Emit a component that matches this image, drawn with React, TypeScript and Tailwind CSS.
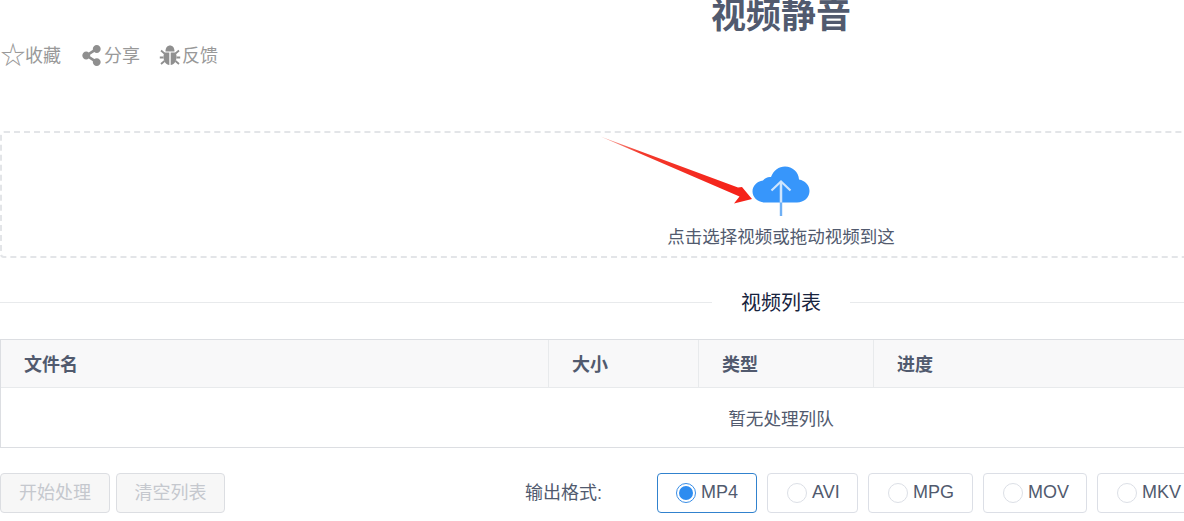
import { FaShareAlt } from "react-icons/fa";

const FONT = "[font-family:'Liberation_Sans','Noto_Sans_CJK_SC',sans-serif]";

function Radio({ label, checked, width }: { label: string; checked?: boolean; width: string }) {
  return (
    <label
      className={`flex h-10 shrink-0 items-center rounded border ${checked ? "pl-[18px]" : "pl-[19px]"} ${width} ${
        checked ? "border-[#3182ce]" : "border-[#dcdfe6]"
      }`}
    >
      <span
        className={`mr-[5px] flex h-5 w-5 shrink-0 items-center justify-center rounded-full border ${
          checked ? "border-[#3a8ee6]" : "border-[#dcdfe6]"
        }`}
      >
        {checked && <span className="h-[14px] w-[14px] rounded-full bg-[#2d8cf0]" />}
      </span>
      <span className="text-[18px] text-[#515a6e]">{label}</span>
    </label>
  );
}

function Beetle() {
  return (
    <svg width="22" height="21" viewBox="0 0 22 21" className="-translate-y-[1px]">
      <path d="M6.5 6.5C6.5 2.5 8.5 0.5 11 0.5C13.5 0.5 15.5 2.5 15.5 6.5Z" fill="#8f8f8f" />
      <path d="M10.3 7.5V20C7 19.6 4.5 16.5 4.5 12C4.5 10 5 8.5 5.5 7.5Z" fill="#8f8f8f" />
      <path d="M11.7 7.5V20C15 19.6 17.5 16.5 17.5 12C17.5 10 17 8.5 16.5 7.5Z" fill="#8f8f8f" />
      <path
        d="M5.5 8.5L2 5.5M16.5 8.5L20 5.5M4.5 12.5H0.8M17.5 12.5H21.2M5.5 16L2 19M16.5 16L20 19"
        stroke="#8f8f8f"
        strokeWidth="1.8"
        fill="none"
      />
    </svg>
  );
}

export default function App() {
  return (
    <div className={`relative h-[521px] w-[1184px] overflow-hidden bg-white ${FONT}`}>
      <div className="w-[1562px]">
        <h1 className="-mt-[8px] h-[45px] text-center text-[35px] font-bold leading-[48px] text-[#515a6e]">视频静音</h1>

        <div className="mt-[7px] flex h-[24px] items-center pl-[1px] text-[18px] leading-[24px] text-[#999999]">
          <span className="flex h-[24px] w-[24px] -translate-y-[3px] items-center justify-center text-[25px] leading-[24px] [font-family:'Noto_Sans_CJK_SC',sans-serif]">☆</span>
          <span>收藏</span>
          <FaShareAlt className="ml-[20px] mr-[2px] h-[21px] w-[21px] -translate-y-[1px] text-[#8f8f8f]" />
          <span>分享</span>
          <span className="ml-[19px] mr-[1px]">
            <Beetle />
          </span>
          <span>反馈</span>
        </div>

        <div className="mt-[63px] flex h-[127px] flex-col items-center rounded-[4px] border-2 border-dashed border-[#e3e5e8]">
          <svg width="58" height="50" viewBox="0 0 58 50" className="mt-[33px]">
            <path
              d="M13 36.5C6 36.5 0.5 31.5 0.5 25.5C0.5 19.5 5 15.5 11 14.5C13 12 16 10.5 19 11C21.5 4.5 27 0.5 33 0.5C40.5 0.5 46.5 6 47 13.5C53 14.5 57.5 19 57.5 25C57.5 31.5 52 36.5 45 36.5Z"
              fill="#3796fb"
            />
            <path d="M29 16V50" stroke="#6fb0f5" strokeWidth="2.4" />
            <path d="M29 16V36.5" stroke="#cfe5fd" strokeWidth="2.4" />
            <path d="M19.5 24.5L29 15.5L38.5 24.5" fill="none" stroke="#cfe5fd" strokeWidth="2.2" />
          </svg>
          <p className="mt-[9px] text-[17.5px] leading-[24px] text-[#515a6e]">点击选择视频或拖动视频到这</p>
        </div>

        <div className="mt-[32px] flex h-[24px] items-center">
          <div className="h-px flex-1 bg-[#e8eaec]" />
          <span className="px-[29px] pt-px text-[20px] leading-[24px] text-[#17233d]">视频列表</span>
          <div className="h-px flex-1 bg-[#e8eaec]" />
        </div>

        <div className="mt-[25px] border-x border-y border-[#dcdee2]">
          <div className="grid h-[48px] grid-cols-[547px_150px_175px_1fr] border-b border-[#e8eaec] bg-[#f8f8f9] text-[18px] font-bold text-[#515a6e]">
            <div className="flex items-center pl-[23px] pt-[3px]">文件名</div>
            <div className="flex items-center border-l border-[#e8eaec] pl-[23px] pt-[3px]">大小</div>
            <div className="flex items-center border-l border-[#e8eaec] pl-[23px] pt-[3px]">类型</div>
            <div className="flex items-center border-l border-[#e8eaec] pl-[23px] pt-[3px]">进度</div>
          </div>
          <div className="flex h-[59px] items-center justify-center pt-[3px] text-[17.6px] text-[#515a6e]">暂无处理列队</div>
        </div>

        <div className="mt-[24px] flex h-[41px] items-center">
          <button className="h-10 w-[110px] rounded border border-[#dcdee2] bg-[#f7f7f7] pt-px text-[18px] text-[#c5c8ce]">开始处理</button>
          <button className="ml-[6px] h-10 w-[109px] rounded border border-[#dcdee2] bg-[#f7f7f7] pt-px text-[18px] text-[#c5c8ce]">清空列表</button>
          <span className="ml-[300px] w-[132px] pt-px text-[18px] text-[#515a6e]">输出格式:</span>
          <div className="flex gap-[10px]">
            <Radio label="MP4" checked width="w-[100px]" />
            <Radio label="AVI" width="w-[91px]" />
            <Radio label="MPG" width="w-[105px]" />
            <Radio label="MOV" width="w-[104px]" />
            <Radio label="MKV" width="w-[104px]" />
          </div>
        </div>
      </div>

      <svg className="absolute left-[600px] top-[136px]" width="156" height="70" viewBox="0 0 156 70">
        <defs>
          <linearGradient id="red" x1="0" y1="0" x2="1" y2="0.4">
            <stop offset="0" stopColor="#f8b0a8" />
            <stop offset="0.3" stopColor="#f33a2c" />
            <stop offset="1" stopColor="#f5231a" />
          </linearGradient>
        </defs>
        <path d="M0.5 0.5L138 51.5L142 51L152 63L134 67.5L139.5 60.5Z" fill="url(#red)" />
      </svg>
    </div>
  );
}
